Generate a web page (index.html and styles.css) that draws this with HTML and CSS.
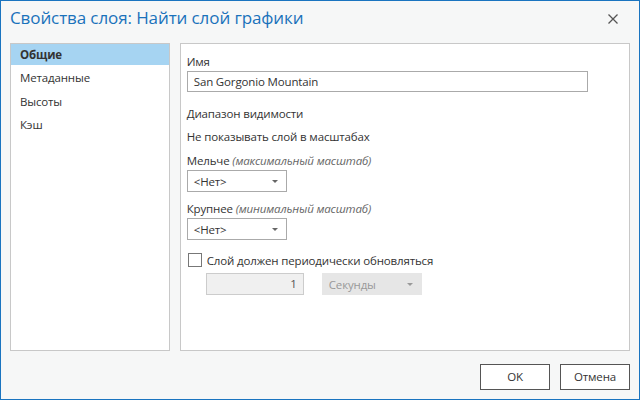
FILE: index.html
```html
<!DOCTYPE html>
<html>
<head>
<meta charset="utf-8">
<link rel="stylesheet" href="styles.css">
</head>
<body>
<div class="window">
  <div class="titlebar">
    <div class="title">Свойства слоя: Найти слой графики</div>
    <svg class="close" width="12" height="12" viewBox="0 0 12 12"><path d="M1.5 1.5 L10.5 10.5 M10.5 1.5 L1.5 10.5" stroke="#555" stroke-width="1.3" fill="none"/></svg>
  </div>
  <div class="main">
    <div class="nav">
      <div class="nav-item active">Общие</div>
      <div class="nav-item">Метаданные</div>
      <div class="nav-item">Высоты</div>
      <div class="nav-item">Кэш</div>
    </div>
    <div class="content">
      <div class="label">Имя</div>
      <div class="textbox">San Gorgonio Mountain</div>
      <div class="label section">Диапазон видимости</div>
      <div class="label plain">Не показывать слой в масштабах</div>
      <div class="label">Мельче <i>(максимальный масштаб)</i></div>
      <div class="combo"><span>&lt;Нет&gt;</span><span class="arrow"></span></div>
      <div class="label gap">Крупнее <i>(минимальный масштаб)</i></div>
      <div class="combo"><span>&lt;Нет&gt;</span><span class="arrow"></span></div>
      <div class="check-row"><span class="checkbox"></span><span>Слой должен периодически обновляться</span></div>
      <div class="refresh-row">
        <div class="numbox">1</div>
        <div class="combo disabled"><span>Секунды</span><span class="arrow"></span></div>
      </div>
    </div>
  </div>
  <div class="footer">
    <div class="btn">OK</div>
    <div class="btn">Отмена</div>
  </div>
</div>
</body>
</html>
```
FILE: styles.css
```css
* { box-sizing: border-box; }
html, body { margin: 0; padding: 0; }
body {
  width: 640px; height: 400px;
  font-family: "Open Sans", "Noto Sans", sans-serif;
  font-size: 11.5px;
  letter-spacing: -0.15px;
  color: #333;
}
.window {
  width: 640px; height: 400px;
  border: 1px solid #1a74c0;
  background: #f6f7f7;
  display: flex; flex-direction: column;
}
.titlebar {
  height: 42px;
  display: flex; align-items: flex-start; justify-content: space-between;
  padding: 5px 20px 0 9px;
}
.title {
  font-size: 17px;
  color: #1a72bb;
  letter-spacing: -0.1px;
  line-height: 24px;
}
.close { margin-top: 7px; }
.main {
  height: 308px;
  display: flex; gap: 10px;
  padding: 0 9px;
}
.nav {
  width: 160px;
  background: #fff;
  border: 1px solid #c8c8c8;
  padding-top: 0;
}
.nav-item {
  height: 23.5px; line-height: 23px;
  padding-left: 9px;
}
.nav-item.active {
  background: #a6d4f2;
  font-weight: bold;
  height: 21px; line-height: 21px;
  margin-bottom: 1px;
}
.content {
  width: 451px;
  background: #fff;
  border: 1px solid #c8c8c8;
  padding: 9px 0 0 6px;
}
.label { height: 18px; line-height: 18px; }
.section { margin-top: 13px; }
.plain { margin-top: 5px; }
.plain + .label { margin-top: 6px; }
.gap { margin-top: 8px; }
i { color: #666; }
.textbox {
  width: 401px; height: 21px;
  border: 1px solid #aaa;
  line-height: 19px;
  padding-left: 6px;
}
.combo {
  width: 100px; height: 22px;
  border: 1px solid #aaa;
  display: flex; align-items: center; justify-content: space-between;
  padding: 0 8px 0 6px;
}
.arrow {
  width: 0; height: 0;
  border-left: 3px solid transparent;
  border-right: 3px solid transparent;
  border-top: 3px solid #666;
}
.check-row {
  margin-top: 12px;
  display: flex; align-items: center; gap: 5px;
  height: 16px;
}
.checkbox {
  width: 14px; height: 14px;
  border: 1px solid #777;
  background: #fff;
  margin-left: 1px;
}
.refresh-row {
  margin-top: 5px;
  padding-left: 19px;
  display: flex; gap: 18px;
}
.numbox {
  width: 98px; height: 22px;
  background: #f0f0f0;
  border: 1px solid #ccc;
  text-align: right;
  padding-right: 6px;
  line-height: 20px;
  color: #555;
}
.combo.disabled {
  background: #e6e6e6;
  border-color: #e6e6e6;
  color: #999;
}
.combo.disabled .arrow { border-top-color: #999; }
.footer {
  flex: 1;
  display: flex; justify-content: flex-end; align-items: flex-start;
  gap: 10px;
  padding: 13px 9px 0 0;
}
.btn {
  width: 70px; height: 26px;
  border: 1px solid #555;
  background: #fff;
  text-align: center;
  line-height: 24px;
}
```
